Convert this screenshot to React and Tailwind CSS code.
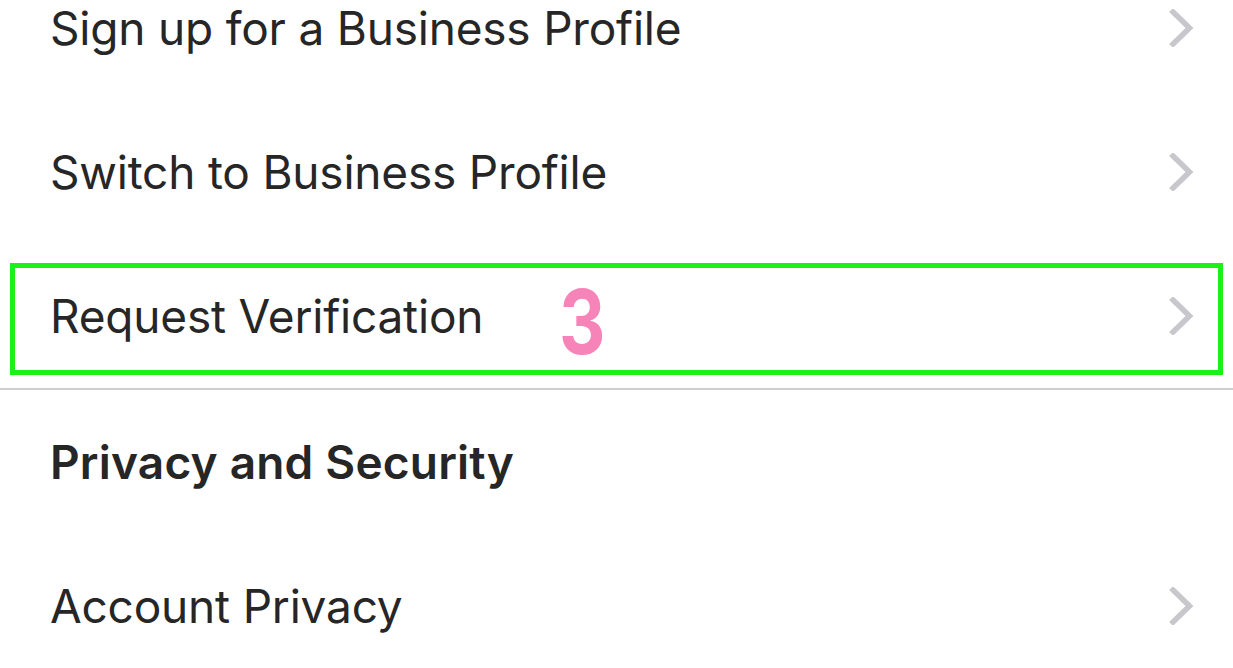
import React from "react";

const Chevron = () => (
  <svg width="26" height="38" viewBox="0 0 26 38" fill="none">
    <path d="M4 3 L20.5 19 L4 35" stroke="#c7c7cc" strokeWidth="5.5" strokeLinecap="square" strokeLinejoin="miter" />
  </svg>
);

const Row = ({ label, chevron = true, bold = false, children }) => (
  <div className="relative h-[144px] flex items-center justify-between pl-[50px] pr-[38px]">
    <span
      className={`text-[46px] text-[#262626] ${bold ? "font-semibold tracking-[0.2px]" : "font-normal tracking-[-0.2px]"}`}
    >
      {label}
    </span>
    {chevron && <Chevron />}
    {children}
  </div>
);

export default function App() {
  return (
    <div
      className="w-[1233px] h-[668px] overflow-hidden bg-white"
      style={{ fontFamily: "Inter, Roboto, sans-serif" }}
    >
      <div className="-mt-[44px] flex flex-col">
        <Row label="Sign up for a Business Profile" />
        <Row label="Switch to Business Profile" />
        <Row label="Request Verification">
          {/* highlight box + step number */}
          <div className="absolute left-[10px] right-[10px] top-[19px] bottom-[13px] border-[5px] border-[#1cf01c]" />
          <span className="absolute left-[559px] top-[33px] text-[90px] font-bold leading-none text-[#f784b8] scale-x-[0.8] origin-left">
            3
          </span>
        </Row>
        <div className="h-[2px] bg-[#cfcfcf]" />
        <Row label="Privacy and Security" chevron={false} bold />
        <Row label="Account Privacy" />
      </div>
    </div>
  );
}
